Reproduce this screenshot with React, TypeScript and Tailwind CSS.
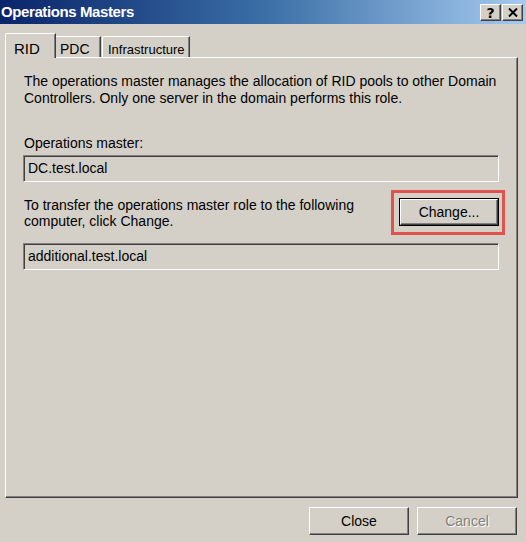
import React from "react";

const raised =
  "border border-t-white border-l-white border-r-[#404040] border-b-[#404040] shadow-[inset_-1px_-1px_0_#808080]";
const sunken =
  "border border-t-[#808080] border-l-[#808080] border-r-white border-b-white shadow-[inset_1px_1px_0_#404040]";

export default function App() {
  return (
    <div className="w-[526px] h-[542px] bg-[#d4d0c8] flex flex-col font-['Liberation_Sans',Arial,sans-serif] text-[14px] text-black overflow-hidden">
      {/* Title bar */}
      <div className="h-[24px] flex items-center justify-between bg-[linear-gradient(to_right,#0a246a_0%,#3a6ea5_50%,#a6caf0_100%)]">
        <span className="pl-[1px] text-white font-bold text-[15px] tracking-[-0.4px]">Operations Masters</span>
        <div className="flex gap-[1px] pr-[3px] pt-[1px]">
          <div className={`w-[21px] h-[17px] bg-[#d4d0c8] flex items-center justify-center ${raised}`}>
            <span className="font-bold text-[14px] leading-none font-['DejaVu_Sans',sans-serif]">?</span>
          </div>
          <div className={`w-[21px] h-[17px] bg-[#d4d0c8] flex items-center justify-center ${raised}`}>
            <svg width="10" height="9" viewBox="0 0 10 9">
              <path d="M1 0.5 L9 8.5 M9 0.5 L1 8.5" stroke="black" strokeWidth="2" />
            </svg>
          </div>
        </div>
      </div>

      {/* Tabs */}
      <div className="mt-[9px] pl-[5px] flex items-end h-[24px] relative z-10">
        <div className="h-[25px] w-[51px] border-l border-t border-r border-l-white border-t-white border-r-[#404040] rounded-tl-[2px] bg-[#d4d0c8] shadow-[inset_-1px_0_0_#808080] pl-[8px] pt-[4px] text-[15px] -mb-[1px]">
          RID
        </div>
        <div className="h-[21px] w-[45px] border-t border-r border-t-white border-r-[#404040] shadow-[inset_-1px_0_0_#808080] pl-[4px] pt-[2px] text-[14px]">
          PDC
        </div>
        <div className="h-[21px] w-[88px] ml-[1px] border-l border-t border-r border-l-white border-t-white border-r-[#404040] rounded-tl-[2px] shadow-[inset_-1px_0_0_#808080] pl-[5px] pt-[3px] text-[13px]">
          Infrastructure
        </div>
      </div>

      {/* Panel */}
      <div className={`ml-[5px] w-[513px] h-[441px] ${raised} pl-[18px] pr-[19px] pt-[15px]`}>
        <p className="leading-[17px] w-[475px]">
          The operations master manages the allocation of RID pools to other Domain Controllers. Only one server in the domain performs this role.
        </p>
        <div className="mt-[28px] leading-[16px]">Operations master:</div>
        <div className={`mt-[4px] h-[27px] w-[476px] -ml-[1px] ${sunken} pl-[4px] flex items-center`}>DC.test.local</div>

        <div className="mt-[14px] flex items-start justify-between w-[481px]">
          <p className="leading-[16px] w-[340px] mt-[1px]">
            To transfer the operations master role to the following computer, click Change.
          </p>
          <div className="border-[3px] border-[#e0524b] pl-[5px] pr-[3px] pt-[5px] pb-[6px] -mt-[6px]">
            <div className="w-[100px] h-[28px] border border-black">
              <div className={`w-full h-full ${raised} flex items-center justify-center`}>Change...</div>
            </div>
          </div>
        </div>

        <div className={`mt-[8px] h-[27px] w-[476px] -ml-[1px] ${sunken} pl-[4px] flex items-center`}>additional.test.local</div>
      </div>

      {/* Bottom buttons */}
      <div className="mt-[9px] flex justify-end gap-[8px] pr-[9px]">
        <div className={`w-[100px] h-[28px] ${raised} flex items-center justify-center`}>Close</div>
        <div className={`w-[100px] h-[28px] ${raised} flex items-center justify-center text-[#808080] [text-shadow:1px_1px_0_#ffffff]`}>Cancel</div>
      </div>
    </div>
  );
}
